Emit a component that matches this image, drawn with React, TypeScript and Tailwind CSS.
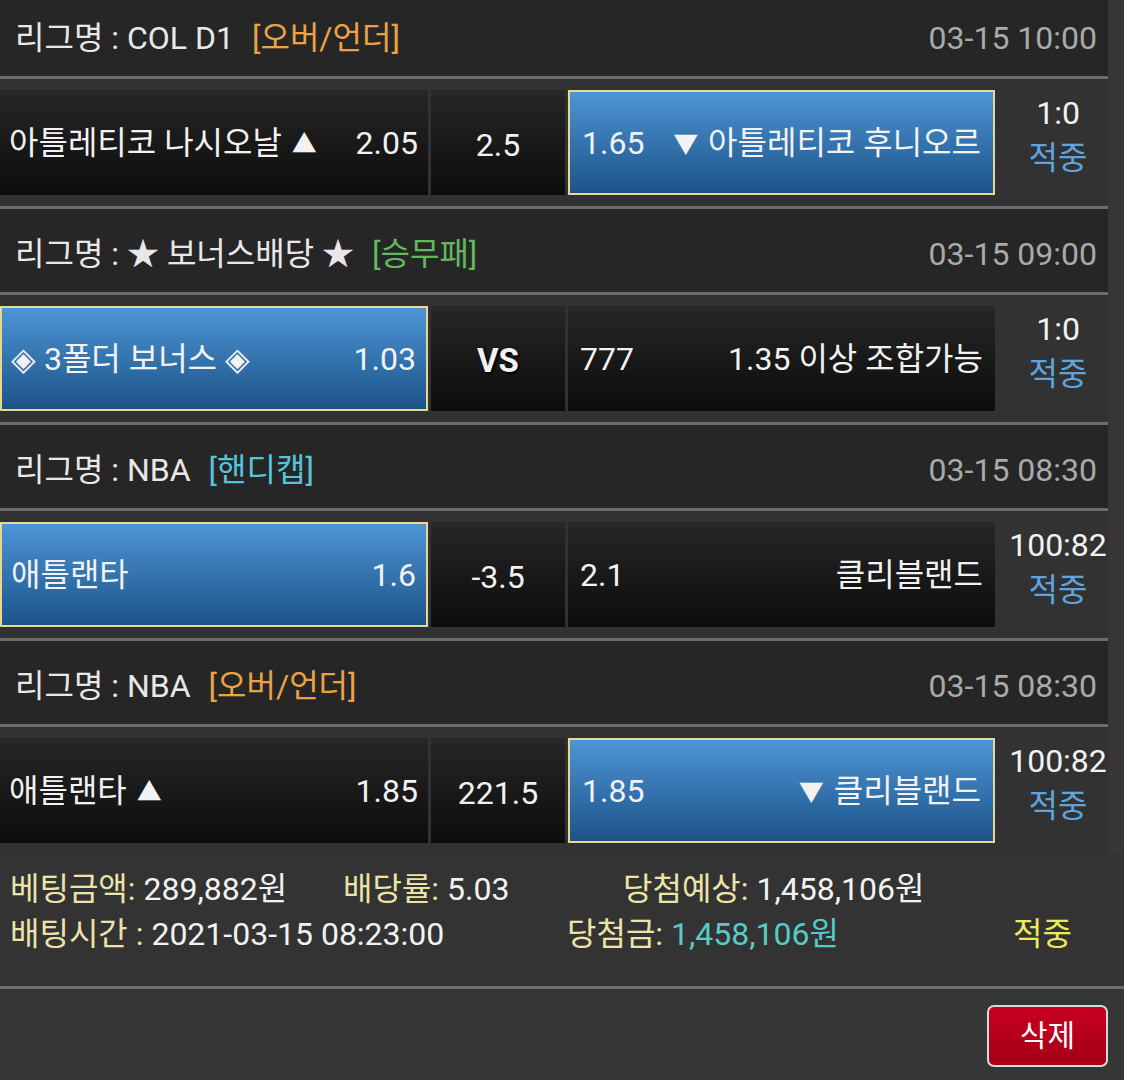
import React from "react";

type Side = { text: string; odds: string; picked?: boolean };

type Bet = {
  league: string;
  tag: string;
  tagColor: string;
  date: string;
  home: Side;
  mid: string;
  away: Side;
  score: string;
};

const bets: Bet[] = [
  {
    league: "COL D1",
    tag: "[오버/언더]",
    tagColor: "text-[#eba247]",
    date: "03-15 10:00",
    home: { text: "아틀레티코 나시오날 ▲", odds: "2.05" },
    mid: "2.5",
    away: { text: "▼ 아틀레티코 후니오르", odds: "1.65", picked: true },
    score: "1:0",
  },
  {
    league: "★ 보너스배당 ★",
    tag: "[승무패]",
    tagColor: "text-[#62b95c]",
    date: "03-15 09:00",
    home: { text: "◈ 3폴더 보너스 ◈", odds: "1.03", picked: true },
    mid: "VS",
    away: { text: "1.35 이상 조합가능", odds: "777" },
    score: "1:0",
  },
  {
    league: "NBA",
    tag: "[핸디캡]",
    tagColor: "text-[#56c4dc]",
    date: "03-15 08:30",
    home: { text: "애틀랜타", odds: "1.6", picked: true },
    mid: "-3.5",
    away: { text: "클리블랜드", odds: "2.1" },
    score: "100:82",
  },
  {
    league: "NBA",
    tag: "[오버/언더]",
    tagColor: "text-[#eba247]",
    date: "03-15 08:30",
    home: { text: "애틀랜타 ▲", odds: "1.85" },
    mid: "221.5",
    away: { text: "▼ 클리블랜드", odds: "1.85", picked: true },
    score: "100:82",
  },
];

const cellDark = "bg-gradient-to-b from-[#272727] to-[#0c0c0c]";
const cellBlue =
  "bg-gradient-to-b from-[#4d95d6] to-[#1c5488] border-2 border-[#e8d792]";

// arrows are drawn a bit smaller than the text around them
function TeamName({ text }: { text: string }) {
  const parts = text.split(/([▲▼])/);
  return (
    <span className="flex items-center">
      {parts.map((p, i) =>
        p === "▲" || p === "▼" ? (
          <span key={i} className="text-[25px] mx-[2px] translate-y-[2px]">
            {p}
          </span>
        ) : (
          <span key={i} className="whitespace-pre">
            {p}
          </span>
        )
      )}
    </span>
  );
}

export default function App() {
  return (
    <div className="min-h-screen bg-[#363636] overflow-hidden font-['Roboto','Noto_Sans_CJK_KR',sans-serif] text-[32px] text-[#f2f2f2] leading-none">
      <div className="-mt-[7px] w-[1108px]">
        {bets.map((bet, i) => (
          <div key={i}>
            {/* league header */}
            <div className="h-[83px] bg-[#262626] flex items-center justify-between pl-[15px] pr-[11px] pt-[6px]">
              <div className="flex items-center">
                <span className="text-[#e8e8e8]">리그명 : {bet.league}</span>
                <span className={`ml-[18px] ${bet.tagColor}`}>{bet.tag}</span>
              </div>
              <span className="text-[#aaaaaa]">{bet.date}</span>
            </div>
            <div className="h-[3px] bg-[#6d6d6d]" />

            {/* match row */}
            <div className="bg-[#323232] pt-[11px] pb-[11px]">
              <div className="flex h-[105px] gap-[3px]">
                <div
                  className={`w-[428px] flex items-center justify-between pl-[9px] pr-[10px] ${
                    bet.home.picked ? cellBlue : cellDark
                  }`}
                >
                  <TeamName text={bet.home.text} />
                  <span>{bet.home.odds}</span>
                </div>
                <div
                  className={`w-[134px] flex items-center justify-center pt-[4px] ${cellDark} ${
                    bet.mid === "VS" ? "font-bold text-[33px] [text-shadow:2px_2px_2px_#000]" : ""
                  }`}
                >
                  {bet.mid}
                </div>
                <div
                  className={`w-[427px] flex items-center justify-between pl-[12px] pr-[12px] ${
                    bet.away.picked ? cellBlue : cellDark
                  }`}
                >
                  <span>{bet.away.odds}</span>
                  <TeamName text={bet.away.text} />
                </div>
                <div className="flex-1 flex flex-col items-center justify-center pl-[10px] pb-[14px] leading-[45px]">
                  <span>{bet.score}</span>
                  <span className="text-[#5ea4de]">적중</span>
                </div>
              </div>
            </div>
            {i < bets.length - 1 && <div className="h-[3px] bg-[#6d6d6d]" />}
          </div>
        ))}
      </div>

      {/* summary */}
      <div className="bg-[#333333] pt-[13px] pb-[29px] pl-[10px] leading-[45px]">
        <div className="flex">
          <div className="w-[333px]">
            <span className="text-[#ece3a8]">베팅금액: </span>289,882원
          </div>
          <div className="w-[280px]">
            <span className="text-[#ece3a8]">배당률: </span>5.03
          </div>
          <div>
            <span className="text-[#ece3a8]">당첨예상: </span>1,458,106원
          </div>
        </div>
        <div className="flex">
          <div className="w-[557px]">
            <span className="text-[#ece3a8]">배팅시간 : </span>2021-03-15 08:23:00
          </div>
          <div className="w-[446px]">
            <span className="text-[#ece3a8]">당첨금: </span>
            <span className="text-[#58cbc8]">1,458,106원</span>
          </div>
          <div className="text-[#ece95a]">적중</div>
        </div>
      </div>
      <div className="h-[3px] bg-[#6d6d6d]" />

      {/* actions */}
      <div className="flex justify-end pt-[16px] pr-[16px]">
        <button className="w-[121px] h-[62px] rounded-[7px] border-2 border-[#d9d9d9] bg-gradient-to-b from-[#c8001f] to-[#a40016] text-[30px] text-white">
          삭제
        </button>
      </div>
    </div>
  );
}
